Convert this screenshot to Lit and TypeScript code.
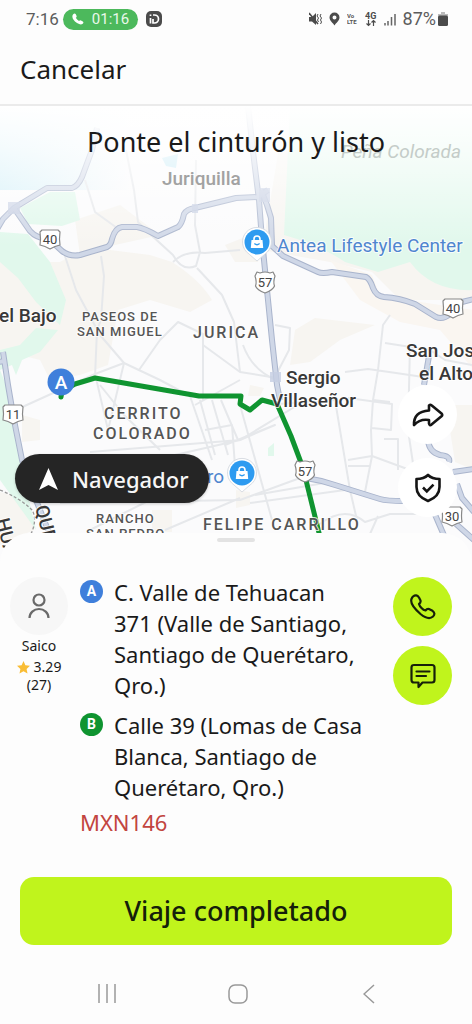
import { LitElement, html, svg, css } from "lit";
import { customElement } from "lit/decorators.js";

type Shield = { x: number; y: number; n: string; us?: boolean };

const shields: Shield[] = [
  { x: 50, y: 239, n: "40" },
  { x: 265, y: 282, n: "57", us: true },
  { x: 453, y: 308, n: "40" },
  { x: 13, y: 414, n: "11" },
  { x: 305, y: 471, n: "57", us: true },
  { x: 452, y: 516, n: "30" },
];

const highways = [
  "M-4 231L3 219L14 208L47 188H72Q78 186 82 177L92 150L97 128",
  "M14 208L30 231Q36 238 50 240L62 251Q70 257 80 255L107 247Q111 245 112 239Q115 228 122 227H137Q144 228 158 236L178 227Q182 224 184 214Q187 209 195 208L236 198L258 197L268 190",
  "M248 106L254 160L259 200L262 240L267 290L272 340L277 385L280 400",
  "M261 190L267 205L271 218L272 246L283 256L318 272Q322 274 332 272L366 277Q370 279 373 288Q376 296 384 297Q400 298 415 304L436 317Q443 320 450 314L462 302L474 299",
  "M3 352L8 385L14 420L22 460L36 500L52 540",
  "M-2 362L5 361",
  "M306 478Q320 480 335 485L380 499Q386 501 404 501",
  "M453 472L474 469",
  "M428 440Q429 452 440 455Q451 456 449 462",
  "M429 356L424 385",
  "M457 484L462 498L474 512",
  "M433 510L446 540",
  "M456 524L474 540",
];

const minor = [
  "M85 180L95 212L117 228M126 150L134 190L138 222L150 234L173 255Q182 272 196 266L200 252L195 225L196 160M173 262Q185 250 205 253L240 250M197 268L222 295L234 322L240 372",
  "M65 256L76 290L100 335L124 363L108 430L96 378M101 256L104 276L101 320L97 330L95 377",
  "M139 370L160 340L178 322L203 334V400M124 363L160 380L190 396L212 460M124 363L95 374L18 409M100 385L124 415L160 450",
  "M203 345L240 372L277 378M200 400L215 455M212 400L228 455M221 400L238 440M205 430L232 425L236 480M195 405L240 380M240 405L272 520M225 445L275 425L240 440L90 452M60 503L240 500L300 478M110 470L240 440",
  "M345 372L368 369L396 373L430 378M390 315L383 325L378 370L373 400L371 430L372 456L410 470M373 400L390 402M278 404L335 400L350 490L357 520M348 398L392 404L391 430L372 428M384 439H398V470M348 460L372 456M348 466H370M372 456L365 492",
  "M240 440L306 400M255 495L330 482M250 503L345 490M90 530L150 500M165 530L240 498M320 524Q345 505 365 522L390 514H430M370 534L378 516",
  "M275 325L290 328L289 350L276 375M243 345Q252 370 276 380M385 343L430 350L445 360L472 365M410 345L408 430L414 470",
];

@customElement("app-root")
export class AppRoot extends LitElement {
  static styles = css`
    :host {
      display: flex;
      flex-direction: column;
      min-height: 100vh;
      background: #fdfdfd;
      color: #1a1a1a;
      font-family: "Noto Sans", "Open Sans", sans-serif;
    }
    * { box-sizing: border-box; }
    svg { display: block; flex: none; }
    button {
      border: 0;
      padding: 0;
      margin: 0;
      font: inherit;
      color: inherit;
      background: none;
      cursor: pointer;
    }
    .status {
      display: flex;
      align-items: center;
      justify-content: space-between;
      height: 38px;
      padding: 0 24px 0 26px;
      font: 400 17px/22px Roboto, sans-serif;
      color: #5c5c5c;
    }
    .side { display: flex; align-items: center; }
    .left { gap: 4px; }
    .right { gap: 7px; }
    .call-pill {
      display: flex;
      align-items: center;
      gap: 8px;
      height: 21px;
      margin-right: 4px;
      padding: 0 9px;
      border-radius: 11px;
      background: #4cb95c;
      color: #e9f8ea;
      font-size: 15px;
    }
    .battery { display: flex; align-items: center; gap: 2px; font-size: 18px; }
    .header {
      display: flex;
      align-items: center;
      height: 68px;
      padding: 0 20px 4px;
      border-bottom: 2px solid #ebebeb;
    }
    .cancel { font-size: 26px; line-height: 36px; }
    .map {
      position: relative;
      flex: 1;
      min-height: 400px;
      overflow: hidden;
      background: #fbfbfc;
      display: grid;
    }
    .canvas {
      position: absolute;
      inset: 0;
      width: 100%;
      height: 100%;
      font-family: Roboto, sans-serif;
      font-weight: 500;
    }
    .hint {
      position: relative;
      margin: 0;
      padding: 18px 20px;
      text-align: center;
      font-size: 27px;
      line-height: 36px;
      font-weight: 400;
    }
    .navigator {
      position: absolute;
      left: 15px;
      bottom: 67px;
      display: flex;
      align-items: center;
      gap: 14px;
      height: 49px;
      padding: 0 20px 0 24px;
      border-radius: 25px;
      background: #252525;
      color: #f6f6f6;
      font-size: 22px;
      font-weight: 500;
      box-shadow: 0 1px 3px #0003;
    }
    .tools {
      position: absolute;
      right: 15px;
      bottom: 53px;
      display: flex;
      flex-direction: column;
      gap: 14px;
    }
    .round {
      display: grid;
      place-items: center;
      width: 59px;
      height: 59px;
      border-radius: 50%;
      background: #fff;
    }
    .lime { background: #c0f41c; }
    .sheet {
      position: relative;
      margin-top: -37px;
      padding: 5px 20px 0;
      border-radius: 30px 30px 0 0;
      background: #fdfdfd;
    }
    .grip {
      width: 38px;
      height: 4px;
      margin: 0 auto 35px;
      border-radius: 2px;
      background: #e3e3e3;
    }
    .trip {
      display: grid;
      grid-template-columns: 58px 1fr 59px;
      gap: 12px;
      align-items: start;
      margin-left: -10px;
    }
    .rider {
      display: flex;
      flex-direction: column;
      align-items: center;
      font-size: 14px;
      line-height: 18px;
    }
    .avatar {
      display: grid;
      place-items: center;
      width: 58px;
      height: 58px;
      margin-bottom: 2px;
      border-radius: 50%;
      background: #f7f7f7;
    }
    .rating { display: flex; align-items: center; gap: 4px; margin-top: 3px; }
    .stops {
      display: grid;
      gap: 9px;
      margin: 0;
      padding: 0;
      list-style: none;
      font-size: 22px;
      line-height: 31px;
    }
    .stop { display: flex; gap: 11px; align-items: flex-start; padding-right: 16px; }
    .badge {
      flex: none;
      display: grid;
      place-items: center;
      width: 23px;
      height: 23px;
      margin-top: 3px;
      border-radius: 50%;
      color: #fff;
      font: 700 14px/23px Roboto, sans-serif;
    }
    .a { background: #3f7fdb; }
    .b { background: #0f9430; }
    .price {
      margin: 4px 0 0;
      font-size: 22px;
      line-height: 31px;
      color: #c2453f;
    }
    .actions { display: grid; gap: 10px; }
    .done {
      display: block;
      width: 100%;
      height: 68px;
      margin-top: 39px;
      padding-bottom: 2px;
      border-radius: 14px;
      background: #c0f41c;
      color: #14200a;
      font-size: 27px;
      font-weight: 500;
    }
    .system {
      display: flex;
      justify-content: space-around;
      align-items: center;
      height: 79px;
      padding: 18px 18px 0 22px;
    }
    .system button { display: grid; place-items: center; width: 48px; height: 40px; }
    .hw-edge { fill: none; stroke: #a9b4cc; stroke-width: 6; stroke-linejoin: round; }
    .hw { fill: none; stroke: #cfd7e7; stroke-width: 4; stroke-linejoin: round; }
    .road { fill: none; stroke: #e6e8eb; stroke-width: 2; stroke-linejoin: round; }
    .route { fill: none; stroke: #0f9430; stroke-width: 5; stroke-linejoin: round; stroke-linecap: round; }
    .town { font-size: 19px; fill: #383838; }
    .area { font-size: 16px; letter-spacing: 2px; fill: #555; }
    .small { font-size: 13px; letter-spacing: 1px; fill: #555; }
    .faded { font-size: 19px; fill: #a2a2a2; }
    .peak { font-size: 19px; font-style: italic; font-weight: 400; fill: #c4ccc8; }
    .poi { font-size: 19px; font-weight: 400; fill: #4f86cf; }
    .sign { font-size: 13px; font-weight: 400; fill: #444; text-anchor: middle; }
    .pin { font-size: 19px; fill: #fff; text-anchor: middle; }
    .halo { paint-order: stroke; stroke: #fffc; stroke-width: 2px; stroke-linejoin: round; }
  `;

  private shield(s: Shield) {
    const d = s.us
      ? "M-8 -10L-5 -9Q0 -11 5 -9L8 -10L10 -6Q8 0 9.5 4Q8 8 0 11Q-8 8 -9.5 4Q-8 0 -10 -6Z"
      : "M-8 -9H8L10 -7Q9 0 10 6Q5 7 0 10Q-5 7 -10 6Q-9 0 -10 -7Z";
    return svg`<g transform="translate(${s.x} ${s.y})">
      <path d=${d} fill="#fff" stroke="#888" stroke-width="1.2" stroke-linejoin="round"></path>
      <text class="sign" y="5">${s.n}</text></g>`;
  }

  private shop(x: number, y: number) {
    return svg`<g transform="translate(${x} ${y})">
      <path d="M0 19L-8 12A14.5 14.5 0 1 1 8 12Z" fill="#fff" stroke="#d9dde3" stroke-width="1"></path>
      <circle r="12.5" fill="#2e9bf0"></circle>
      <path d="M-5.5 -2H5.5L6.2 6H-6.2Z" fill="#fff"></path>
      <path d="M-3 -1V-3A3 3 0 0 1 3 -3V-1" fill="none" stroke="#fff" stroke-width="1.6"></path>
      <path d="M-2.6 1.5Q0 4 2.6 1.5" fill="none" stroke="#2e9bf0" stroke-width="1.2"></path></g>`;
  }

  private map() {
    return html`<svg class="canvas" viewBox="0 106 472 464" preserveAspectRatio="xMidYMid slice" role="img" aria-label="Mapa">
      <defs>
        <linearGradient id="fade" x1="0" y1="0" x2="0" y2="1">
          <stop offset="0" stop-color="#fff" stop-opacity="1"></stop>
          <stop offset="0.3" stop-color="#fff" stop-opacity="0.75"></stop>
          <stop offset="1" stop-color="#fff" stop-opacity="0"></stop>
        </linearGradient>
        <linearGradient id="lake" x1="0" y1="0" x2="1" y2="0">
          <stop offset="0" stop-color="#d3f0f8"></stop>
          <stop offset="1" stop-color="#d3f0f8" stop-opacity="0"></stop>
        </linearGradient>
      </defs>
      <rect y="106" width="472" height="464" fill="#fbfbfc"></rect>
      <g fill="#f7f5f1">
        <path d="M0 250L30 262L60 262L75 254L110 250L150 255L172 262Q200 280 212 300L190 312L150 300L118 310L108 365L80 375L50 380L40 360L0 350Z"></path>
        <path d="M75 220L120 205L160 235L115 245L80 255Z"></path>
        <path d="M225 245L258 232L258 262L235 262Z"></path>
        <path d="M282 130L262 250L330 262L372 272L400 300L474 300V200H300Z"></path>
        <path d="M295 330L315 318L375 325L340 340L310 362L290 365Z"></path>
        <path d="M22 415L40 420V440L22 442ZM0 492Q35 500 34 530L0 545ZM152 510H172V532H152ZM446 405H474V470L455 462ZM236 490L250 492V505L236 508ZM250 385L264 388L260 396H248Z"></path>
      </g>
      <path d="M330 260L372 275L380 296L474 310V370L440 330L400 322L360 300Z" fill="#faf6f1"></path>
      <g fill="#e1f8ec">
        <path d="M20 208L50 192L75 192L80 220L62 226L28 224Z"></path>
        <path d="M0 232L28 234L50 262L66 300L60 325L36 302L18 278L0 262Z"></path>
        <path d="M58 330L40 352L22 360L16 375L12 365L0 370V350L20 345L36 328Z"></path>
        <path d="M0 370L12 400L22 470L36 530L0 480Z"></path>
        <path d="M290 106L284 235Q320 245 345 262L378 272L410 262Q432 292 474 290V106Z"></path>
        <path d="M268 448L274 443V456H268Z"></path>
      </g>
      <rect y="106" width="130" height="84" fill="url(#lake)"></rect>
      <path d="M162 158L178 154L176 168L166 166Z" fill="#c3e9f5"></path>
      ${minor.map((d) => svg`<path class="road" d=${d}></path>`)}
      ${highways.map((d) => svg`<path class="hw-edge" d=${d}></path>`)}
      ${highways.map((d) => svg`<path class="hw" d=${d}></path>`)}
      <path d="M8 202H20V214H8ZM259 188H270V202H259ZM192 204H198V213H192ZM270 372H281V382H270Z" fill="#c5cee2" opacity=".8"></path>
      <path d="M0 490Q20 498 32 510Q38 520 30 536" fill="none" stroke="#999" stroke-width="1.3" stroke-dasharray="3 2"></path>
      <rect y="106" width="472" height="140" fill="url(#fade)"></rect>
      <path class="route" d="M61 397L62 391L75 384L95 378L199 396H241L240 404L250 410L262 400L277 404L291 436L303 468L322 545"></path>
      ${shields.map((s) => this.shield(s))}
      ${this.shop(257, 242)} ${this.shop(242, 473)}
      <circle cx="61" cy="382" r="13.5" fill="#3f7fdb"></circle>
      <text class="pin" x="61" y="389">A</text>
      <text class="peak" x="341" y="158">Peña Colorada</text>
      <text class="faded" x="162" y="185">Juriquilla</text>
      <text class="poi halo" x="277" y="252">Antea Lifestyle Center</text>
      <g class="town halo">
        <text x="-1" y="322">el Bajo</text>
        <text x="286" y="384">Sergio</text>
        <text x="271" y="407">Villaseñor</text>
        <text x="406" y="357">San José</text>
        <text x="419" y="380">el Alto</text>
        <text transform="translate(35 507) rotate(76)">QUERÉTARO</text>
        <text transform="translate(-4 520) rotate(76)">HUA</text>
      </g>
      <g class="small halo">
        <text x="82" y="321">PASEOS DE</text>
        <text x="77" y="336">SAN MIGUEL</text>
        <text x="96" y="523">RANCHO</text>
        <text x="86" y="538">SAN PEDRO</text>
      </g>
      <g class="area halo">
        <text x="193" y="338">JURICA</text>
        <text x="104" y="419">CERRITO</text>
        <text x="93" y="439">COLORADO</text>
        <text x="203" y="530">FELIPE CARRILLO</text>
      </g>
      <text class="poi" x="207" y="483">ro</text>
    </svg>`;
  }

  render() {
    return html`
      <div class="status">
        <div class="side left">
          <span>7:16</span>
          <span class="call-pill">
            <svg width="12" height="12" viewBox="0 0 12 12"><path d="M1 1.6Q2.6-.4 3.8 1.2L4.6 3Q4.9 4 3.8 4.8Q4.8 6.9 7 8Q8 6.9 9 7.4L10.8 8.4Q12.2 9.4 10.4 11Q8.6 12.3 5 10Q0 6.600 .4 3Q.5 2.200 1 1.600Z" fill="#fff"></path></svg>
            <span>01:16</span>
          </span>
          <svg width="16" height="16" viewBox="0 0 16 16"><rect width="16" height="16" rx="5" fill="#4b4b4b"></rect><path d="M4.500 3.500V5M4.500 7V12.500M7 4H8.500A4 4 0 0 1 8.500 12H7V8" fill="none" stroke="#fff" stroke-width="1.700"></path></svg>
        </div>
        <div class="side right">
          <svg width="13" height="14" viewBox="0 0 13 14"><path d="M0 5H3L7 1V13L3 9.500H0Z" fill="#4b4b4b"></path><path d="M0 1L9 12" stroke="#4b4b4b" stroke-width="1.500"></path><path d="M9 2L8 4L9.500 6L8.500 8L9.500 10M12 2L11 4L12.500 6L11.500 8L12.500 10L11.500 12" fill="none" stroke="#4b4b4b" stroke-width="1"></path></svg>
          <svg width="11" height="14" viewBox="0 0 11 14"><path fill-rule="evenodd" d="M5.500 .500A5 5 0 0 1 10.500 5.500C10.500 8.500 7 11 5.500 13.500C4 11 .500 8.500 .500 5.500A5 5 0 0 1 5.500 .500ZM5.500 3.500A2 2 0 1 0 5.500 7.500A2 2 0 1 0 5.500 3.500Z" fill="#4b4b4b"></path></svg>
          <svg width="11" height="14" viewBox="0 0 11 14" font-family="Roboto" font-size="6" font-weight="700" fill="#555"><text x="0" y="6">Vo</text><text x="0" y="12">LTE</text></svg>
          <svg width="12" height="15" viewBox="0 0 12 15" font-family="Roboto" font-size="9" font-weight="700" fill="#4b4b4b"><text x="0" y="7">4G</text><path d="M3.500 8V13.500M1.500 11.500L3.500 13.500L5.500 11.500M8.500 14V8.500M6.500 10.500L8.500 8.500L10.500 10.500" fill="none" stroke="#4b4b4b" stroke-width="1.200"></path></svg>
          <svg width="12" height="13" viewBox="0 0 12 13"><path d="M1 10V12.500M4 8V12.500M7.500 4V12.500M11 1V12.500" stroke="#666" stroke-width="1.500"></path></svg>
          <span class="battery">87%
            <svg width="10" height="14" viewBox="0 0 10 14"><path d="M3 0H7V2H10V4H0V2H3Z" fill="#bbb"></path><rect y="3.500" width="10" height="10.500" rx="1.500" fill="#4b4b4b"></rect></svg>
          </span>
        </div>
      </div>

      <header class="header"><button class="cancel">Cancelar</button></header>

      <section class="map">
        ${this.map()}
        <h1 class="hint">Ponte el cinturón y listo</h1>
        <button class="navigator">
          <svg width="19" height="22" viewBox="0 0 19 22"><path d="M9.500 0L19 22L9.500 17L0 22Z" fill="#fff"></path></svg>
          Navegador
        </button>
        <div class="tools">
          <button class="round" aria-label="Compartir">
            <svg width="32" height="24" viewBox="0 0 32 24"><path d="M17 2.500Q18 1 19.500 2.300L29.500 10.500Q31 12 29.500 13.300L19.500 21.600Q17.500 23 17 20.500V17Q8 15.500 2 22Q1.500 8.500 17 7.500Z" fill="none" stroke="#151515" stroke-width="2.600" stroke-linejoin="round"></path></svg>
          </button>
          <button class="round" aria-label="Seguridad">
            <svg width="28" height="30" viewBox="0 0 28 30"><path d="M14 2Q18 6 25.500 6V14Q25.500 23.500 14 28Q2.500 23.500 2.500 14V6Q10 6 14 2Z" fill="none" stroke="#151515" stroke-width="2.600" stroke-linejoin="round"></path><path d="M9 14.500L12.800 18.300L19.500 11.600" fill="none" stroke="#151515" stroke-width="2.600"></path></svg>
          </button>
        </div>
      </section>

      <main class="sheet">
        <div class="grip"></div>
        <div class="trip">
          <div class="rider">
            <div class="avatar">
              <svg width="22" height="26" viewBox="0 0 22 26" fill="none" stroke="#6a6a6a" stroke-width="2.200"><circle cx="11" cy="7" r="5.500"></circle><path d="M1.500 25A9.500 9 0 0 1 20.500 25"></path></svg>
            </div>
            <span>Saico</span>
            <span class="rating">
              <svg width="13" height="13" viewBox="0 0 13 13"><path d="M6.500 0L8.400 4.300L13 4.800L9.600 8L10.500 12.600L6.500 10.300L2.500 12.600L3.400 8L0 4.800L4.600 4.300Z" fill="#f9bd35"></path></svg>
              3.29
            </span>
            <span>(27)</span>
          </div>
          <div>
            <ol class="stops">
              <li class="stop"><span class="badge a">A</span><span>C. Valle de Tehuacan 371 (Valle de Santiago, Santiago de Querétaro, Qro.)</span></li>
              <li class="stop"><span class="badge b">B</span><span>Calle 39 (Lomas de Casa Blanca, Santiago de Querétaro, Qro.)</span></li>
            </ol>
            <p class="price">MXN146</p>
          </div>
          <div class="actions">
            <button class="round lime" aria-label="Llamar">
              <svg width="26" height="26" viewBox="0 0 26 26"><path d="M3 2.500Q6.500-.3 9 3.500L10.500 6.500Q11 8.500 9 10Q9.500 12 11.500 14Q13.500 16.200 15.500 16.500Q17 14.500 19 15L22.500 16.800Q26 19.500 23 22.500Q18.500 26.500 10.500 20Q-.5 10.500 1.500 5Q2 3.500 3 2.500Z" fill="none" stroke="#17200a" stroke-width="2.200" stroke-linejoin="round"></path></svg>
            </button>
            <button class="round lime" aria-label="Mensaje">
              <svg width="26" height="26" viewBox="0 0 26 26" fill="none" stroke="#17200a" stroke-width="2.200" stroke-linejoin="round"><path d="M4 2H22Q24.500 2 24.500 4.500V17Q24.500 19.500 22 19.500H12.500L8.500 24V19.500H4Q1.500 19.500 1.500 17V4.500Q1.500 2 4 2Z"></path><path d="M6.500 8.500H19.500M6.500 13H16" stroke-linecap="round"></path></svg>
            </button>
          </div>
        </div>
        <button class="done">Viaje completado</button>
        <nav class="system">
          <button aria-label="Recientes"><svg width="18" height="20" viewBox="0 0 18 20"><path d="M1 0V19M9 0V19M17 0V19" stroke="#999" stroke-width="1.500"></path></svg></button>
          <button aria-label="Inicio"><svg width="20" height="20" viewBox="0 0 20 20"><rect x="1" y="1" width="18" height="18" rx="6" fill="none" stroke="#999" stroke-width="1.500"></rect></svg></button>
          <button aria-label="Atrás"><svg width="12" height="20" viewBox="0 0 12 20"><path d="M11 1L1 10L11 19" fill="none" stroke="#999" stroke-width="1.500"></path></svg></button>
        </nav>
      </main>
    `;
  }
}
